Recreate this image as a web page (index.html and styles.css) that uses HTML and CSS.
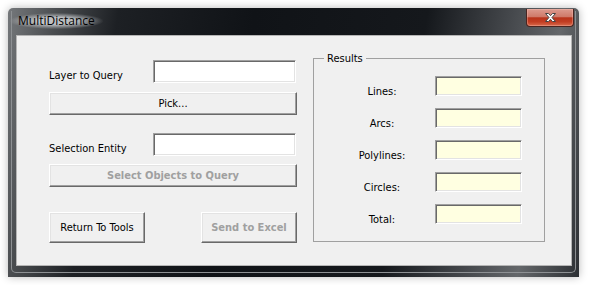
FILE: index.html
```html
<!DOCTYPE html>
<html lang="en">
<head>
<meta charset="utf-8">
<title>MultiDistance</title>
<link rel="stylesheet" href="styles.css">
</head>
<body>
<div class="window">
  <div class="titlebar">
    <span class="title">MultiDistance</span>
    <button class="close" aria-label="Close">
      <svg width="13" height="11" viewBox="0 0 13 11"><path d="M1.5 1.5h3l2 2.2 2-2.2h3l-3.5 4 3.5 4h-3l-2-2.2-2 2.2h-3l3.5-4z" fill="#fff" stroke="#444" stroke-width="1" stroke-linejoin="round"/></svg>
    </button>
  </div>
  <div class="client">
    <div class="left">
      <div class="field-row">
        <label class="lbl">Layer to Query</label>
        <input class="textbox" type="text">
      </div>
      <button class="btn wide pick">Pick...</button>
      <div class="field-row second">
        <label class="lbl">Selection Entity</label>
        <input class="textbox" type="text">
      </div>
      <button class="btn wide select disabled">Select Objects to Query</button>
      <div class="actions">
        <button class="btn small">Return To Tools</button>
        <button class="btn small disabled">Send to Excel</button>
      </div>
    </div>
    <fieldset class="results">
      <legend>Results</legend>
      <div class="res-list">
        <div class="res-row"><span class="res-lbl">Lines:</span><span class="res-box"></span></div>
        <div class="res-row"><span class="res-lbl">Arcs:</span><span class="res-box"></span></div>
        <div class="res-row"><span class="res-lbl">Polylines:</span><span class="res-box"></span></div>
        <div class="res-row"><span class="res-lbl">Circles:</span><span class="res-box"></span></div>
        <div class="res-row"><span class="res-lbl">Total:</span><span class="res-box"></span></div>
      </div>
    </fieldset>
  </div>
</div>
</body>
</html>
```
FILE: styles.css
```css
* { box-sizing: border-box; }
body {
  margin: 0;
  padding: 8px;
  background: #fff;
  font-family: "DejaVu Sans Condensed", "DejaVu Sans", sans-serif;
  font-size: 11px;
  color: #000;
}
.window {
  position: relative;
  width: 571px;
  height: 269px;
  display: flex;
  flex-direction: column;
  border-radius: 5px 5px 0 0;
  background:
    linear-gradient(100deg, #75787b 0%, #4a4d50 8%, #1d2024 18%, #101317 40%, #15181c 68%, #474a4e 82%, #64676a 90%, #2d3034 100%);
  box-shadow: 0 0 9px rgba(0,0,0,0.28);
}
.window::after {
  content: "";
  position: absolute;
  left: 3px;
  right: 3px;
  top: 3px;
  bottom: 4px;
  border: 1px solid #8d9093;
  border-top: none;
  border-radius: 0 0 5px 5px;
  pointer-events: none;
}
.titlebar {
  height: 27px;
  display: flex;
  justify-content: space-between;
  align-items: flex-start;
  padding: 0 5px 0 10px;
}
.title {
  margin-top: 5px;
  font-family: "Open Sans", "Noto Sans", sans-serif;
  font-size: 12px;
  line-height: 16px;
  color: #000;
  background: radial-gradient(ellipse at center, rgba(230,232,235,0.75) 30%, rgba(200,202,205,0) 72%);
  padding: 0 8px;
  margin-left: -8px;
}
.close {
  margin-top: 1px;
  width: 48px;
  height: 18px;
  padding: 0;
  border: 1px solid #4a2520;
  border-top: none;
  border-radius: 0 0 4px 4px;
  background: linear-gradient(#dc9b8f 0%, #cf7a6a 45%, #b8341c 52%, #c23d22 75%, #d86a4c 100%);
  box-shadow: inset 0 0 0 1px rgba(255,200,190,0.35);
  display: flex;
  align-items: center;
  justify-content: center;
}
.close svg { display: block; }
.client {
  flex: 1;
  margin: 0 7px 11px 8px;
  background: #f0f0f0;
  border: 1px solid #b5b5b5;
  display: flex;
  align-items: flex-start;
  padding: 16px 0 0 32px;
}
.left {
  width: 248px;
  margin-top: 8px;
  display: flex;
  flex-direction: column;
}
.field-row {
  display: flex;
  align-items: flex-start;
  height: 23px;
}
.field-row.second { margin-top: 18px; }
.lbl {
  padding-top: 9px;
  line-height: 13px;
}
.textbox {
  margin: 0 1px 0 auto;
  width: 143px;
  height: 23px;
  background: #fff;
  border: 1px solid;
  border-color: #a0a0a0 #fff #fff #a0a0a0;
  box-shadow: inset 1px 1px 0 #696969, inset -1px -1px 0 #e3e3e3;
  outline: none;
}
.btn {
  font-family: inherit;
  font-size: 11px;
  color: #000;
  background: #f0f0f0;
  border: 1px solid;
  border-color: #fff #696969 #696969 #fff;
  box-shadow: inset -1px -1px 0 #a0a0a0, inset 1px 1px 0 #e3e3e3;
  padding: 0;
  line-height: 13px;
}
.btn.wide { width: 248px; height: 23px; }
.btn.pick { margin-top: 9px; }
.btn.select { margin-top: 8px; }
.btn.disabled { color: #a0a0a0; font-weight: bold; }
.actions {
  margin-top: 25px;
  display: flex;
  justify-content: space-between;
}
.btn.small { width: 96px; height: 31px; }
.results {
  margin: 0 0 0 16px;
  width: 231px;
  padding: 0;
  border: 1px solid #a0a0a0;
}
.results legend {
  margin-left: 10px;
  padding: 0 3px;
  line-height: 13px;
}
.res-list {
  padding: 11px 22px 17px 38px;
  display: flex;
  flex-direction: column;
  gap: 12px;
}
.res-row {
  display: flex;
  align-items: flex-start;
  height: 20px;
}
.res-lbl {
  width: 60px;
  text-align: center;
  padding-top: 9px;
  line-height: 13px;
}
.res-box {
  margin-left: 23px;
  width: 87px;
  height: 20px;
  background: #ffffe1;
  border: 1px solid;
  border-color: #a0a0a0 #fff #fff #a0a0a0;
  box-shadow: inset 1px 1px 0 #696969, inset -1px -1px 0 #e3e3e3;
}
```
